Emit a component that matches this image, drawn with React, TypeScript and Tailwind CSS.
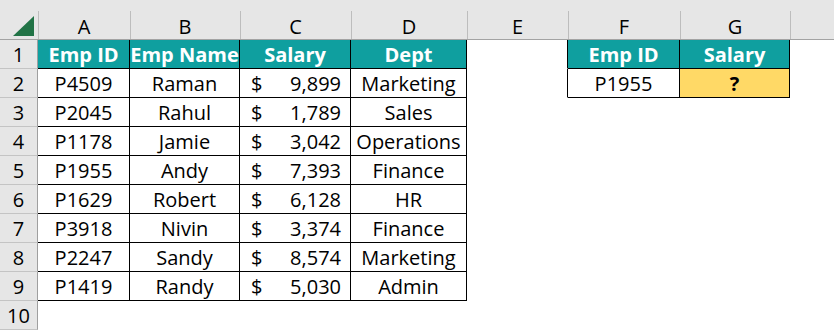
const cols = [
  { key: "A", w: "w-[92px]" },
  { key: "B", w: "w-[110px]" },
  { key: "C", w: "w-[111px]" },
  { key: "D", w: "w-[116px]" },
  { key: "E", w: "w-[101px]" },
  { key: "F", w: "w-[112px]" },
  { key: "G", w: "w-[110px]" },
];

const employees = [
  ["P4509", "Raman", "9,899", "Marketing"],
  ["P2045", "Rahul", "1,789", "Sales"],
  ["P1178", "Jamie", "3,042", "Operations"],
  ["P1955", "Andy", "7,393", "Finance"],
  ["P1629", "Robert", "6,128", "HR"],
  ["P3918", "Nivin", "3,374", "Finance"],
  ["P2247", "Sandy", "8,574", "Marketing"],
  ["P1419", "Randy", "5,030", "Admin"],
];

const cell = "h-full shrink-0 border-r border-b flex items-center justify-center";
const boxed = "border-black";
const bare = "border-transparent";
const head = "bg-[#0f9f9f] text-white font-bold";

const RowNum = ({ n }: { n: number }) => (
  <div className="w-[38px] h-full shrink-0 bg-[#e6e6e6] border-r border-r-[#9f9f9f] border-b border-b-[#c4c4c4] flex items-center justify-center">
    {n}
  </div>
);

const App = () => {
  return (
    <div className="w-[834px] h-[330px] overflow-hidden bg-white text-black text-[20px] leading-[29px] font-['Open_Sans',sans-serif]">
      {/* column letters */}
      <div className="h-[40px] bg-[#e6e6e6] border-b border-[#a3a3a3] flex items-end">
        <div className="w-[38px] h-full shrink-0 relative">
          <div className="absolute left-[13px] top-[16px] w-[21px] h-[20px] bg-[#217346] [clip-path:polygon(100%_0,100%_100%,0_100%)]" />
        </div>
        {cols.map((c) => (
          <div
            key={c.key}
            className={`${c.w} h-[28px] shrink-0 border-l border-[#bdbdbd] flex items-center justify-center leading-[28px]`}
          >
            <span className="-ml-px translate-y-[2px]">{c.key}</span>
          </div>
        ))}
        <div className="h-[28px] flex-1 border-l border-[#bdbdbd]" />
      </div>

      {/* row 1 */}
      <div className="h-[29px] flex">
        <RowNum n={1} />
        <div className={`w-[92px] ${cell} ${boxed} ${head}`}>Emp ID</div>
        <div className={`w-[110px] ${cell} ${boxed} ${head}`}>Emp Name</div>
        <div className={`w-[111px] ${cell} ${boxed} ${head}`}>Salary</div>
        <div className={`w-[116px] ${cell} ${boxed} ${head}`}>Dept</div>
        <div className={`w-[101px] ${cell} border-b-transparent border-r-black`} />
        <div className={`w-[112px] ${cell} ${boxed} ${head}`}>Emp ID</div>
        <div className={`w-[110px] ${cell} ${boxed} ${head}`}>Salary</div>
        <div className="flex-1" />
      </div>

      {employees.map((e, i) => (
        <div key={e[0]} className="h-[29px] flex">
          <RowNum n={i + 2} />
          <div className={`w-[92px] ${cell} ${boxed}`}>{e[0]}</div>
          <div className={`w-[110px] ${cell} ${boxed}`}>{e[1]}</div>
          <div className={`w-[111px] ${cell} ${boxed} !justify-between pl-[11px] pr-[9px]`}>
            <span>$</span>
            <span>{e[2]}</span>
          </div>
          <div className={`w-[116px] ${cell} ${boxed}`}>{e[3]}</div>
          {i === 0 ? (
            <>
              <div className={`w-[101px] ${cell} border-b-transparent border-r-black`} />
              <div className={`w-[112px] ${cell} ${boxed}`}>P1955</div>
              <div className={`w-[110px] ${cell} ${boxed} bg-[#ffd966] font-bold`}>?</div>
            </>
          ) : (
            <div className={`w-[323px] ${cell} ${bare}`} />
          )}
          <div className="flex-1" />
        </div>
      ))}

      <div className="h-[29px] flex">
        <RowNum n={10} />
        <div className="flex-1" />
      </div>
    </div>
  );
};

export default App;
